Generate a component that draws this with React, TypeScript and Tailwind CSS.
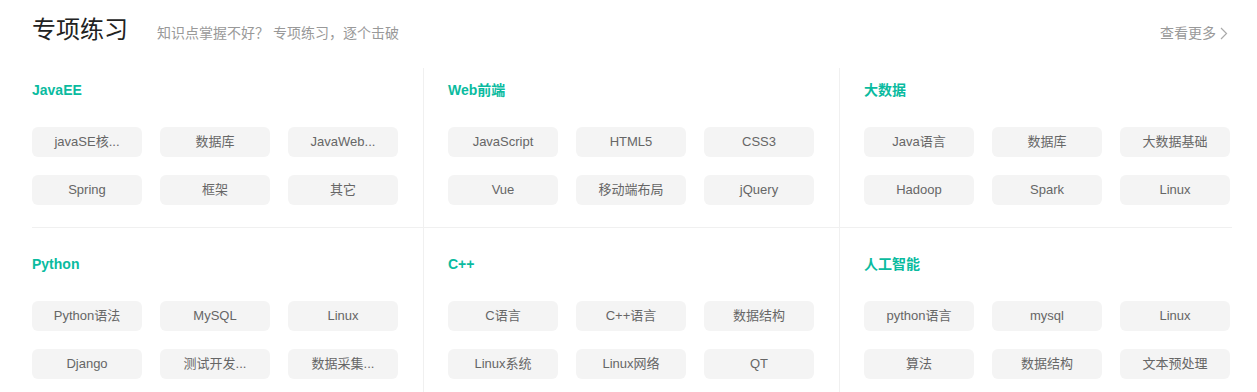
import React from 'react'

type Section = { title: string; tags: string[] }

const ROWS: Section[][] = [
  [
    { title: 'JavaEE', tags: ['javaSE核...', '数据库', 'JavaWeb...', 'Spring', '框架', '其它'] },
    { title: 'Web前端', tags: ['JavaScript', 'HTML5', 'CSS3', 'Vue', '移动端布局', 'jQuery'] },
    { title: '大数据', tags: ['Java语言', '数据库', '大数据基础', 'Hadoop', 'Spark', 'Linux'] },
  ],
  [
    { title: 'Python', tags: ['Python语法', 'MySQL', 'Linux', 'Django', '测试开发...', '数据采集...'] },
    { title: 'C++', tags: ['C语言', 'C++语言', '数据结构', 'Linux系统', 'Linux网络', 'QT'] },
    { title: '人工智能', tags: ['python语言', 'mysql', 'Linux', '算法', '数据结构', '文本预处理'] },
  ],
]

const CELL_PAD = ['pl-0 border-r', 'pl-6 border-r', 'pl-6']

function Cell({ section, col, first }: { section: Section; col: number; first: boolean }) {
  return (
    <div
      className={`border-[#f0f0f0] ${CELL_PAD[col]} ${first ? 'pt-3 pb-[22px]' : 'pt-[26px] pb-[23px]'}`}
    >
      <h3 className="text-[14px] font-bold leading-5 text-[#0abb9f]">{section.title}</h3>
      <div className="mt-[27px] grid grid-cols-[110px_110px_110px] gap-[18px]">
        {section.tags.map((t, i) => (
          <span
            key={i}
            className="flex h-[30px] items-center justify-center rounded-md bg-[#f4f4f4] text-[13px] text-[#666]"
          >
            {t}
          </span>
        ))}
      </div>
    </div>
  )
}

export default function App() {
  return (
    <div
      className="min-h-screen bg-white px-8"
      style={{ fontFamily: '"Liberation Sans", Arial, "Noto Sans CJK SC", sans-serif' }}
    >
      <div className="flex h-[68px] w-[1200px] items-baseline pt-[14px]">
        <h2 className="text-[24px] leading-8 text-[#222]">专项练习</h2>
        <p className="ml-[29px] text-[14px] text-[#999]">知识点掌握不好？ 专项练习，逐个击破</p>
        <a className="ml-auto mr-1 flex items-center gap-0.5 text-[14px] text-[#999]">
          查看更多
          <svg width="8" height="13" viewBox="0 0 8 13" fill="none" className="ml-0.5">
            <polyline points="1,1 6.5,6.5 1,12" stroke="#aaa" strokeWidth="1.2" />
          </svg>
        </a>
      </div>
      <div className="w-[1200px]">
        {ROWS.map((row, r) => (
          <div
            key={r}
            className={`grid grid-cols-[392px_416px_392px] ${r === 0 ? 'border-b border-[#f0f0f0]' : ''}`}
          >
            {row.map((s, c) => (
              <Cell key={s.title} section={s} col={c} first={r === 0} />
            ))}
          </div>
        ))}
      </div>
    </div>
  )
}
